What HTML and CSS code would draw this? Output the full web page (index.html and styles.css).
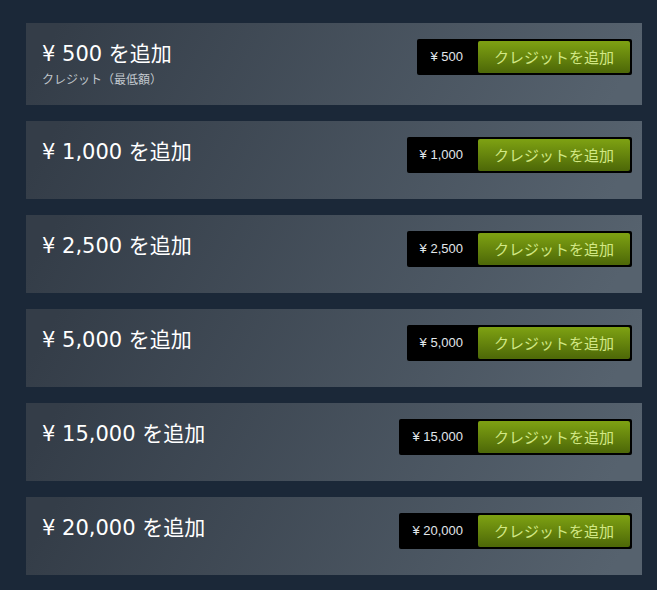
FILE: index.html
```html
<!DOCTYPE html>
<html lang="ja">
<head>
<meta charset="utf-8">
<title>ウォレットに追加</title>
<link rel="stylesheet" href="styles.css">
</head>
<body>
<div class="page">
  <div class="card">
    <div class="row">
      <div class="info">
        <h1 class="title">¥ 500 を追加</h1>
        <div class="sub">クレジット（最低額）</div>
      </div>
      <div class="action">
        <div class="price">¥ 500</div>
        <a class="btn"><span>クレジットを追加</span></a>
      </div>
    </div>
  </div>
  <div class="card">
    <div class="row">
      <div class="info"><h1 class="title">¥ 1,000 を追加</h1></div>
      <div class="action">
        <div class="price">¥ 1,000</div>
        <a class="btn"><span>クレジットを追加</span></a>
      </div>
    </div>
  </div>
  <div class="card">
    <div class="row">
      <div class="info"><h1 class="title">¥ 2,500 を追加</h1></div>
      <div class="action">
        <div class="price">¥ 2,500</div>
        <a class="btn"><span>クレジットを追加</span></a>
      </div>
    </div>
  </div>
  <div class="card">
    <div class="row">
      <div class="info"><h1 class="title">¥ 5,000 を追加</h1></div>
      <div class="action">
        <div class="price">¥ 5,000</div>
        <a class="btn"><span>クレジットを追加</span></a>
      </div>
    </div>
  </div>
  <div class="card">
    <div class="row">
      <div class="info"><h1 class="title">¥ 15,000 を追加</h1></div>
      <div class="action">
        <div class="price">¥ 15,000</div>
        <a class="btn"><span>クレジットを追加</span></a>
      </div>
    </div>
  </div>
  <div class="card">
    <div class="row">
      <div class="info"><h1 class="title">¥ 20,000 を追加</h1></div>
      <div class="action">
        <div class="price">¥ 20,000</div>
        <a class="btn"><span>クレジットを追加</span></a>
      </div>
    </div>
  </div>
</div>
</body>
</html>
```

FILE: styles.css
```css
html, body {
  margin: 0;
  padding: 0;
  background: #1b2838;
}
body {
  font-family: "Liberation Sans", "Noto Sans CJK JP", sans-serif;
}
.page {
  padding: 23px 15px 0 26px;
  display: flex;
  flex-direction: column;
  gap: 16px;
}
.card {
  background: linear-gradient(-60deg, #56626e 5%, #343d48 95%);
  padding: 16px 10px 18px 16px;
}
.row {
  display: flex;
  justify-content: space-between;
  align-items: flex-start;
  min-height: 44px;
}
.title {
  margin: 2px 0 0 0;
  font-family: "DejaVu Sans", "Noto Sans CJK JP", sans-serif;
  font-weight: normal;
  font-size: 21px;
  line-height: 26px;
  color: #ffffff;
}
.sub {
  margin-top: 4px;
  font-family: "Noto Sans CJK JP", sans-serif;
  font-size: 12px;
  line-height: 16px;
  color: #c0c6cc;
}
.action {
  display: flex;
  background: #000000;
  border-radius: 2px;
  padding: 2px 2px 2px 0;
}
.price {
  padding: 0 15px 0 13px;
  font-size: 13px;
  line-height: 32px;
  color: #e2e7eb;
}
.btn {
  display: block;
  padding: 1px;
  border-radius: 2px;
  background: linear-gradient(to bottom, #7c9f12 5%, #4f6a08 95%);
  color: #d2e885;
  font-family: "Noto Sans CJK JP", sans-serif;
  font-size: 15px;
  line-height: 30px;
}
.btn span {
  display: block;
  padding: 0 15px;
}
```
